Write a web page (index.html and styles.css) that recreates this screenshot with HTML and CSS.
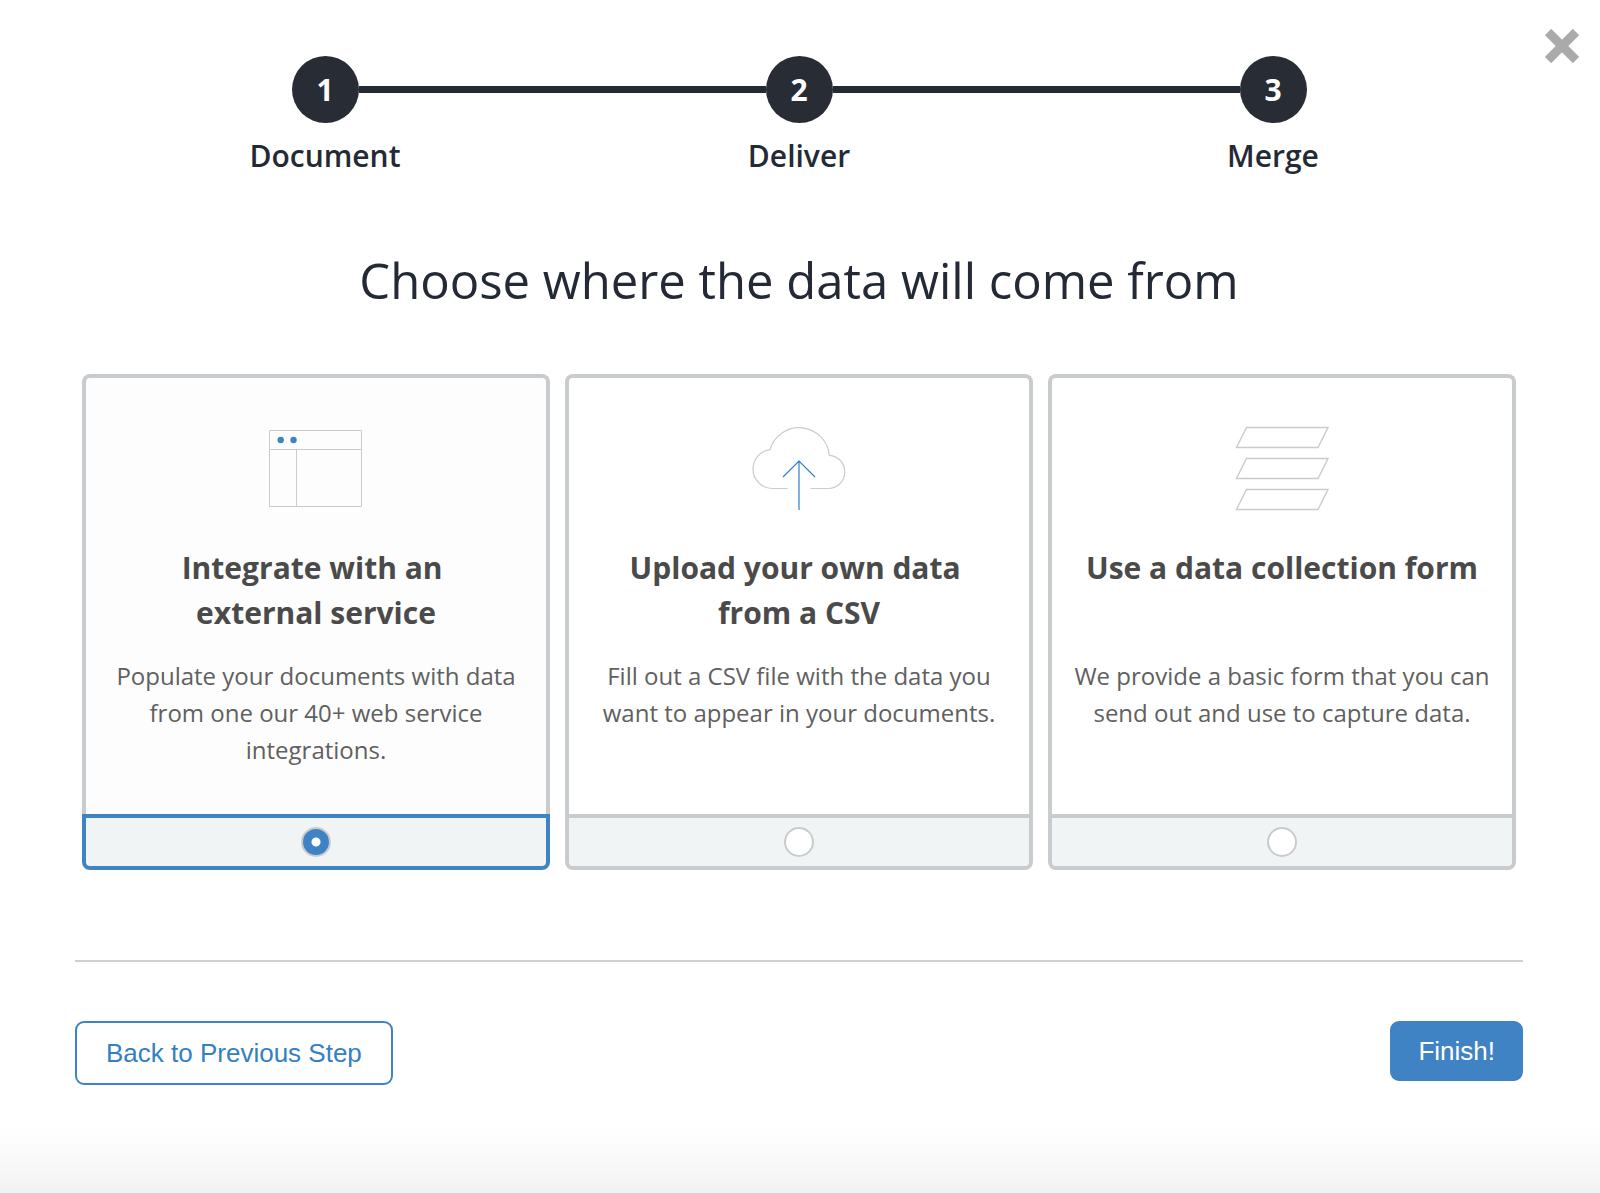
FILE: index.html
```html
<!DOCTYPE html>
<html lang="en">
<head>
    <meta charset="UTF-8">
    <meta name="viewport" content="width=device-width, initial-scale=1.0">
    <title>Choose where the data will come from</title>
    <link rel="stylesheet" href="styles.css">
</head>
<body>
    <button type="button" class="close-button" aria-label="Close">
        <svg width="34" height="34" viewBox="0 0 34 34">
            <path d="M3 3L31 31M31 3L3 31" stroke="#aaaaaa" stroke-width="9" fill="none"/>
        </svg>
    </button>

    <main class="wizard">
        <ol class="steps">
            <li class="step">
                <span class="step-marker"><span class="step-number">1</span></span>
                <span class="step-label">Document</span>
            </li>
            <li class="step">
                <span class="step-marker"><span class="step-number">2</span></span>
                <span class="step-label">Deliver</span>
            </li>
            <li class="step">
                <span class="step-marker"><span class="step-number">3</span></span>
                <span class="step-label">Merge</span>
            </li>
        </ol>

        <h1 class="title">Choose where the data will come from</h1>

        <form>
            <div class="options">
                <label class="option">
                    <span class="option-body">
                        <svg class="option-icon" width="94" height="86" viewBox="0 0 94 86" fill="none" stroke="#c8cccd">
                            <path d="M0.5 4.5H92.5V80.5H0.5ZM0.5 23.5H92.5M27.5 23.5V80.5"/>
                            <circle cx="11.7" cy="14" r="3.2" fill="#3f83c4" stroke="none"/>
                            <circle cx="24.5" cy="14" r="3.2" fill="#3f83c4" stroke="none"/>
                        </svg>
                        <span class="option-title">Integrate with an&nbsp;<br>external service</span>
                        <span class="option-text">Populate your documents with data from one our 40+ web service integrations.</span>
                    </span>
                    <span class="option-footer"><input type="radio" name="source" value="integration" checked></span>
                </label>

                <label class="option">
                    <span class="option-body">
                        <svg class="option-icon" width="94" height="86" viewBox="0 0 94 86" fill="none" stroke="#c8cccd" stroke-width="1.2">
                            <path d="M35.5 62.5H20.5A19.5 19.5 0 0 1 1 43A19.5 19.5 0 0 1 18 23.6A30.3 30.3 0 0 1 77.3 29.3A16.6 16.6 0 0 1 92.8 45.8A16.6 16.6 0 0 1 76.5 62.5H58.5"/>
                            <path d="M47 84V35M31 51L47 35L63 51" stroke="#2f80c8" stroke-width="1.2"/>
                        </svg>
                        <span class="option-title">Upload your own data&nbsp;<br>from a CSV</span>
                        <span class="option-text">Fill out a CSV file with the data you want to appear in your documents.</span>
                    </span>
                    <span class="option-footer"><input type="radio" name="source" value="csv"></span>
                </label>

                <label class="option">
                    <span class="option-body">
                        <svg class="option-icon" width="94" height="86" viewBox="0 0 94 86" fill="none" stroke="#c8cccd" stroke-width="1.4">
                            <path d="M11.5 1.5H93L83 21.5H1.5Z"/>
                            <path d="M11.5 32.5H93L83 52.5H1.5Z"/>
                            <path d="M11.5 63.5H93L83 83.5H1.5Z"/>
                        </svg>
                        <span class="option-title">Use a data collection form</span>
                        <span class="option-text">We provide a basic form that you can send out and use to capture data.</span>
                    </span>
                    <span class="option-footer"><input type="radio" name="source" value="form"></span>
                </label>
            </div>

            <div class="actions">
                <button type="button" class="button button-back">Back to Previous Step</button>
                <button type="submit" class="button button-finish">Finish!</button>
            </div>
        </form>
    </main>
</body>
</html>
```

FILE: styles.css
```css
* {
    box-sizing: border-box;
}

body {
    margin: 0;
    min-height: 100vh;
    background: #fff linear-gradient(#fff, #fbfbfb 40%, #f2f2f2) bottom / 100% 70px no-repeat;
    font-family: "Open Sans", sans-serif;
    color: #242a35;
}

.close-button {
    position: absolute;
    top: 29px;
    right: 21px;
    padding: 0;
    border: 0;
    background: none;
    cursor: pointer;
}

.close-button svg {
    display: block;
}

.wizard {
    padding: 56px 77px 0 75px;
}

/* progress steps */
.steps {
    display: flex;
    margin: 0;
    padding: 0 13px;
    list-style: none;
}

.step {
    flex: 1;
    text-align: center;
}

.step-marker {
    display: flex;
    align-items: center;
}

.step-marker::before,
.step-marker::after {
    content: "";
    flex: 1;
    height: 7px;
    background: #242a33;
}

.step:first-child .step-marker::before,
.step:last-child .step-marker::after {
    background: none;
}

.step-number {
    width: 67px;
    height: 67px;
    border-radius: 50%;
    background: #282c35;
    color: #fff;
    font-size: 30px;
    font-weight: 700;
    line-height: 67px;
}

.step-label {
    display: block;
    margin-top: 13px;
    font-size: 30px;
    font-weight: 600;
    line-height: 40px;
}

.title {
    margin: 70px 0 60px;
    font-size: 49px;
    font-weight: 400;
    line-height: 68px;
    text-align: center;
}

/* data source cards */
.options {
    display: flex;
    gap: 15px;
    padding: 0 7px;
}

.option {
    display: flex;
    flex: 1;
    flex-direction: column;
    text-align: center;
    cursor: pointer;
}

.option-body {
    display: flex;
    flex: 1;
    flex-direction: column;
    align-items: center;
    padding: 48px 20px 46px;
    border: 4px solid #c8cccf;
    border-bottom: 0;
    border-radius: 8px 8px 0 0;
}

.option:has(:checked) .option-body {
    background: #fdfdfd;
}

.option-title {
    min-height: 90px;
    margin: 33px 0 22px;
    color: #4a4a4a;
    font-size: 30px;
    font-weight: 700;
    line-height: 45px;
}

.option-text {
    color: #606060;
    font-size: 24px;
    line-height: 37px;
}

.option-footer {
    display: flex;
    align-items: center;
    justify-content: center;
    height: 56px;
    border: 4px solid #c8cccf;
    border-radius: 0 0 8px 8px;
    background: #f0f4f5;
}

.option:has(:checked) .option-footer {
    border-color: #3f83c4;
}

.option input {
    appearance: none;
    width: 30px;
    height: 30px;
    margin: 0;
    border: 2px solid #c8cccf;
    border-radius: 50%;
    background: #fff;
}

.option input:checked {
    background: radial-gradient(circle, #fff 4px, #3f83c4 5px);
}

.actions {
    display: flex;
    align-items: flex-start;
    justify-content: space-between;
    margin-top: 90px;
    padding-top: 59px;
    border-top: 2px solid #cdd1d3;
}

.button {
    border: 2px solid #3f83c4;
    border-radius: 9px;
    font-family: "Liberation Sans", Arial, sans-serif;
    font-size: 26px;
    line-height: 30px;
    cursor: pointer;
}

.button-back {
    padding: 15px 29px;
    background: #fff;
    color: #3380c2;
}

.button-finish {
    padding: 13px 26px;
    background: #3f83c4;
    color: #fff;
}
```
